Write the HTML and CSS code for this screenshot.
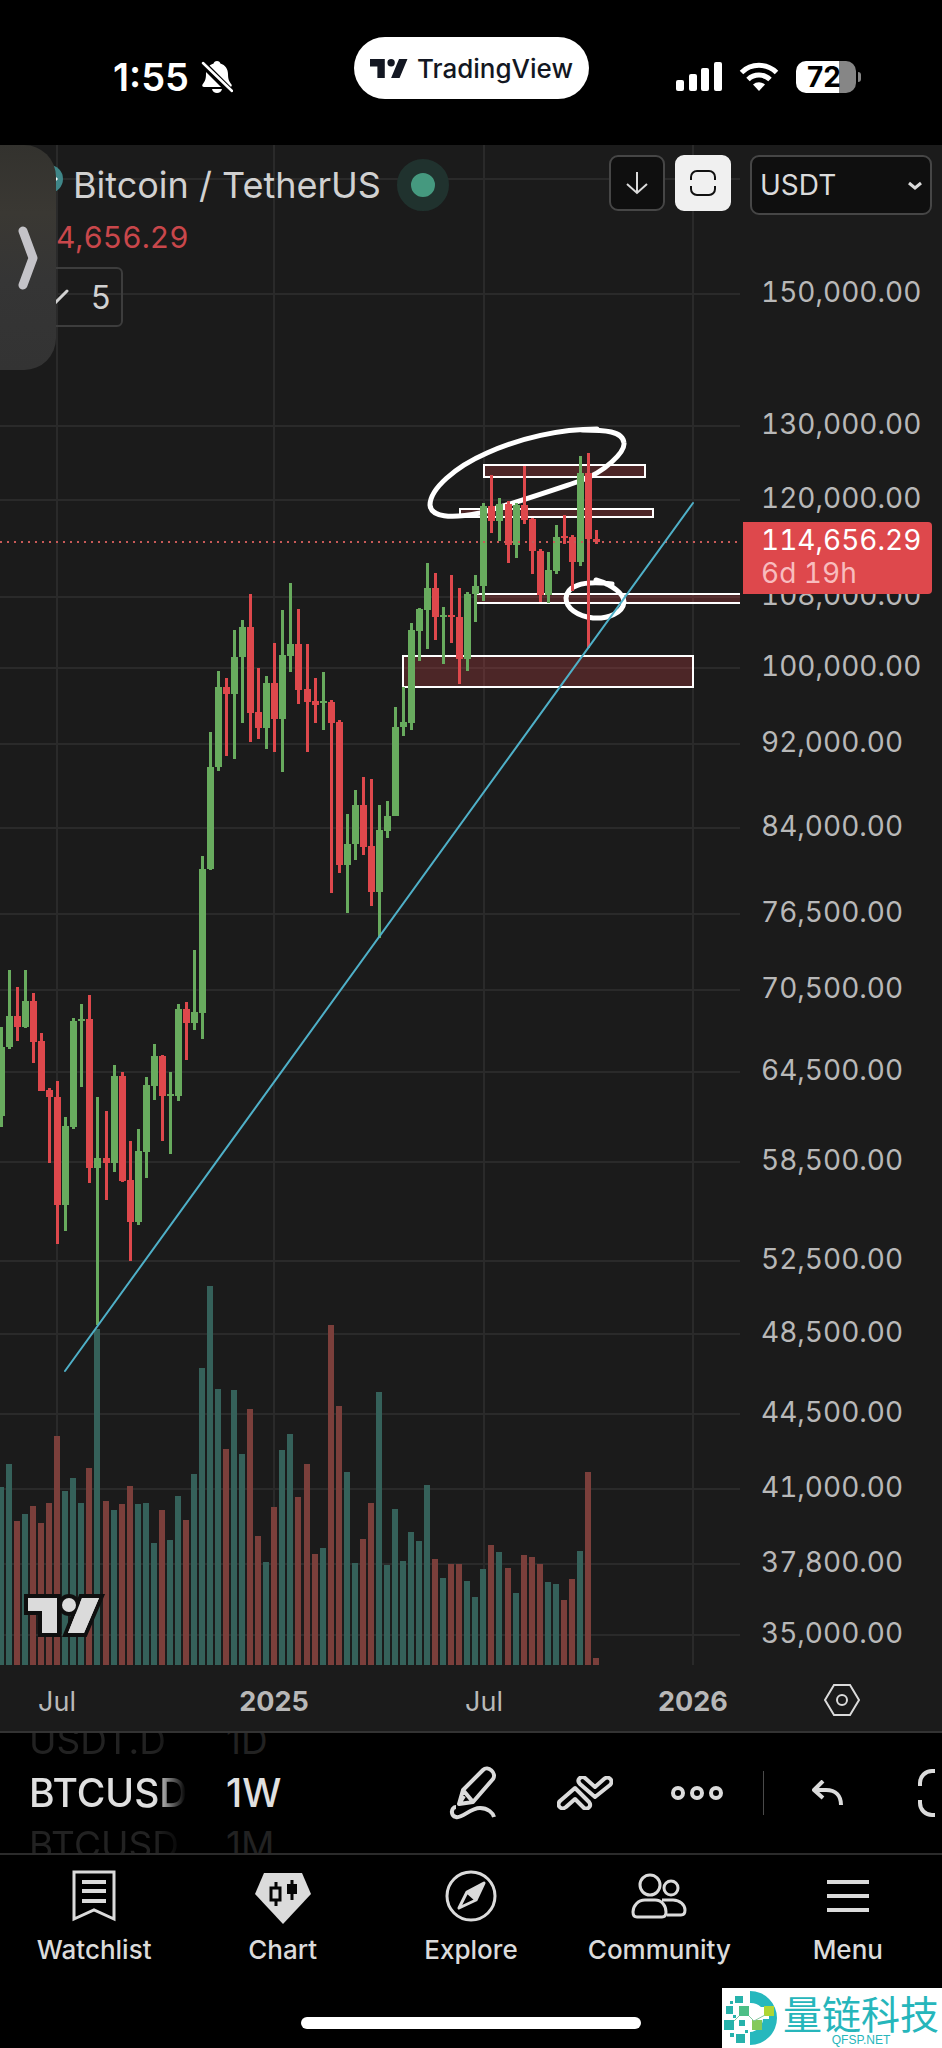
FILE: index.html
```html
<!DOCTYPE html>
<html lang="en">
<head>
    <meta charset="UTF-8">
    <meta name="viewport" content="width=device-width, initial-scale=1.0">
    <title>Bitcoin / TetherUS - TradingView</title>
    <link rel="stylesheet" href="styles.css">
</head>
<body>
    <header class="status-bar">
        <div class="status-left">
            <span class="time">1:55</span>
            <svg class="bell" width="32" height="34" viewBox="0 0 32 34">
                <path d="M16 1c2 0 3 1 3.400 2.500 5 1.500 7.600 5.500 7.600 10.500 0 6 1.500 7.500 3.500 10.500.7 1.300 0 2.500-1.500 2.500H3c-1.500 0-2.200-1.200-1.500-2.500C3.500 21.500 5 20 5 14c0-5 2.600-9 7.600-10.500C13 2 14 1 16 1z" fill="#fff"/>
                <path d="M11 29h10c-.5 2.500-2.500 4-5 4s-4.500-1.500-5-4z" fill="#fff"/>
                <path d="M1 3l29 29" stroke="#000" stroke-width="7"/>
                <path d="M2 3l29 28" stroke="#fff" stroke-width="2.500" stroke-linecap="round"/>
            </svg>
        </div>
        <div class="app-pill">
            <svg width="38" height="19" viewBox="0 0 36 18">
                <path d="M14 18H7V7H0V0h14zM28 18h-8L27.500 0h8z" fill="#131722"/>
                <circle cx="20" cy="3.500" r="3.500" fill="#131722"/>
            </svg>
            <span>TradingView</span>
        </div>
        <div class="status-right">
            <svg width="46" height="30" viewBox="0 0 46 30" fill="#fff">
                <rect x="0" y="18" width="8" height="11" rx="2"/>
                <rect x="13" y="12" width="8" height="17" rx="2"/>
                <rect x="25" y="6" width="8" height="23" rx="2"/>
                <rect x="38" y="0" width="8" height="29" rx="2"/>
            </svg>
            <svg width="40" height="30" viewBox="0 0 40 30">
                <path d="M2.500 10.500a25 25 0 0 1 35 0M9 17.500a16 16 0 0 1 22 0" fill="none" stroke="#fff" stroke-width="5"/>
                <path d="M20 29l-6-6.500a9 9 0 0 1 12 0z" fill="#fff"/>
            </svg>
            <div class="battery">72</div>
        </div>
    </header>

    <main class="chart">
        <svg id="chart" viewBox="0 145 942 1586"></svg>

        <div class="legend">
            <div class="legend-title">
                <svg class="coin" width="28" height="28" viewBox="0 0 28 28">
                    <circle cx="14" cy="14" r="14" fill="#3f8688"/>
                    <path d="M17 8l6 6-6 6z" fill="#fff"/>
                </svg>
                <h1>Bitcoin / TetherUS</h1>
                <span class="market-dot"></span>
            </div>
            <div class="legend-price">114,656.29</div>
            <button class="legend-toggle">
                <svg width="28" height="16" viewBox="0 0 28 16">
                    <path d="M2 2l12 12L26 2" fill="none" stroke="#d1d1d1" stroke-width="3" stroke-linecap="round"/>
                </svg>
                5
            </button>
        </div>

        <div class="chart-controls">
            <button class="square-button" aria-label="Scroll down">
                <svg width="24" height="26" viewBox="0 0 24 26">
                    <path d="M12 2v21M2 14l10 9 10-9" fill="none" stroke="#dbdbdb" stroke-width="2"/>
                </svg>
            </button>
            <button class="square-button active" aria-label="Full chart">
                <svg width="26" height="26" viewBox="0 0 26 26">
                    <path d="M1 10V7a6 6 0 0 1 6-6h12a6 6 0 0 1 6 6v3M1 16v3a6 6 0 0 0 6 6h12a6 6 0 0 0 6-6v-3" fill="none" stroke="#111" stroke-width="2"/>
                </svg>
            </button>
            <div class="currency">
                <select aria-label="Currency">
                    <option>USDT</option>
                </select>
                <svg width="14" height="10" viewBox="0 0 14 10">
                    <path d="M1 2l6 5 6-5" fill="none" stroke="#dbdbdb" stroke-width="3"/>
                </svg>
            </div>
        </div>

        <button class="side-handle" aria-label="Open panel">
            <svg width="22" height="66" viewBox="0 0 22 66">
                <path d="M6 6l10 27L6 60" fill="none" stroke="#c4c3c8" stroke-width="9" stroke-linecap="round" stroke-linejoin="round"/>
            </svg>
        </button>
    </main>

    <section class="toolbar">
        <div class="wheel symbols">
            <span>USDT.D</span>
            <strong>BTCUSD</strong>
            <span>BTCUSD</span>
        </div>
        <div class="wheel intervals">
            <span>1D</span>
            <strong>1W</strong>
            <span>1M</span>
        </div>
        <div class="tools">
            <button aria-label="Draw">
                <svg width="50" height="54" viewBox="0 0 50 54">
                    <path d="M11 38l4-14L35 4c5-5 14 3 10 9L25 36zM15 24l10 12M11 38l5-8M8 41c-5 0-6 9 0 10 6 2 14-9 24-9 8 0 13 5 14 9" />
                </svg>
            </button>
            <button aria-label="Patterns">
                <svg width="56" height="34" viewBox="0 0 56 34">
                    <path d="M18 12l14 14c3 4-1 8-5 6l-9-9-9 8c-5 4-10-2-6-6zM38 21L23 8c-4-4 1-9 5-6l10 9 9-8c5-4 10 2 6 6z"/>
                </svg>
            </button>
            <button aria-label="More">
                <svg width="52" height="14" viewBox="0 0 52 14">
                    <circle cx="7" cy="7" r="5"/>
                    <circle cx="26" cy="7" r="5"/>
                    <circle cx="45" cy="7" r="5"/>
                </svg>
            </button>
            <div class="divider"></div>
            <button aria-label="Undo">
                <svg width="32" height="26" viewBox="0 0 32 26">
                    <path d="M11 1L2 10l9 8M2 10h12c10 0 15 6 15 15"/>
                </svg>
            </button>
            <button class="fullscreen" aria-label="Fullscreen">
                <svg width="48" height="48" viewBox="0 0 48 48">
                    <path d="M2 17v-3A12 12 0 0 1 14 2h20a12 12 0 0 1 12 12v3M2 31v3a12 12 0 0 0 12 12h20a12 12 0 0 0 12-12v-3"/>
                </svg>
            </button>
        </div>
    </section>

    <nav class="tab-bar">
        <a href="#watchlist">
            <svg width="56" height="56" viewBox="0 0 56 56">
                <path d="M8 4h40v47l-20-9-20 9z" fill="none" stroke="#dbdbdb" stroke-width="3"/>
                <path d="M16 14h24M16 23h24M16 33h24" stroke="#dbdbdb" stroke-width="4"/>
            </svg>
            Watchlist
        </a>
        <a href="#chart">
            <svg width="56" height="56" viewBox="0 0 56 56">
                <path d="M9 5h38l9 21-28 30L0 26z" fill="#dbdbdb"/>
                <path d="M16 20h9v12h-9zM21 14v5M21 33v5M37 12v20" fill="none" stroke="#050505" stroke-width="3"/>
                <path d="M32 16h10v10H32z" fill="#050505"/>
            </svg>
            Chart
        </a>
        <a href="#explore">
            <svg width="56" height="56" viewBox="0 0 56 56">
                <circle cx="28" cy="28" r="24" fill="none" stroke="#dbdbdb" stroke-width="3"/>
                <path d="M16 40l8-16 17-9-8 17zM24 24l9 8" fill="none" stroke="#dbdbdb" stroke-width="3" stroke-linejoin="round"/>
                <path d="M24 24l17-9-8 17z" fill="#dbdbdb"/>
            </svg>
            Explore
        </a>
        <a href="#community">
            <svg width="56" height="56" viewBox="0 0 56 56" fill="none" stroke="#dbdbdb" stroke-width="3">
                <circle cx="19" cy="17" r="10"/>
                <circle cx="40" cy="20" r="7"/>
                <path d="M14 32h10c7 0 11 6 11 12 0 3-1 5-4 5H6c-3 0-4-2-4-5 0-6 5-12 12-12zM31 32h11c7 0 12 5 12 10 0 3-1 5-4 5H36"/>
            </svg>
            Community
        </a>
        <a href="#menu">
            <svg width="56" height="56" viewBox="0 0 56 56">
                <path d="M7 14h42M7 28h42M7 42h42" stroke="#dbdbdb" stroke-width="4"/>
            </svg>
            Menu
        </a>
    </nav>

    <footer class="bottom">
        <div class="home-indicator"></div>
    </footer>

    <div class="watermark">
        <svg width="54" height="56" viewBox="0 0 54 56">
            <path d="M27 1a27 27 0 0 1 0 54V42a14 14 0 0 0 13-13h6V17h-8a15 15 0 0 0-11-4z" fill="#26b8bd"/>
            <path d="M12 6h8v7h-8zM3 16h7v8H3zM1 30h10v10H1zM16 30h6v6h-6zM13 44h9v9h-9z" fill="#26b2ab"/>
            <path d="M16 16h10v10H16z" fill="#4ebf86"/>
            <path d="M29 30h10v10H29z" fill="#84c95b"/>
            <path d="M41 16h10v10H41z" fill="#aed634"/>
            <path d="M7 11h3v3H7zM10 25h3v3h-3zM7 43h4v4H7zM22 40h3v3h-3z" fill="#26b2ab"/>
            <path d="M26 26l5 5 11-6M16 26l-5 5" fill="none" stroke="#84c9a0"/>
        </svg>
        <div class="watermark-text">
            <span class="name">量链科技</span>
            <span class="site">QFSP.NET</span>
        </div>
    </div>

    <script src="chart.js"></script>
</body>
</html>
```
FILE: styles.css
```css
* {
    box-sizing: border-box;
}

body {
    font-family: Inter, "Noto Sans CJK SC", sans-serif;
    background-color: #000;
    color: #dbdbdb;
    margin: 0;
    min-height: 100vh;
    display: flex;
    flex-direction: column;
    position: relative;
    overflow-x: hidden;
}

button {
    font-family: inherit;
    background: none;
    border: none;
    padding: 0;
    color: inherit;
    cursor: pointer;
}

svg {
    display: block;
    flex: none;
}

/* Status bar */
.status-bar {
    height: 145px;
    padding: 37px 82px 0 113px;
    display: grid;
    grid-template-columns: 1fr auto 1fr;
    align-items: start;
    color: #fff;
}

.status-left,
.status-right {
    display: flex;
    align-items: center;
    height: 80px;
}

.status-left {
    gap: 12px;
}

.status-right {
    justify-content: flex-end;
    gap: 17px;
}

.time {
    font-size: 38px;
    font-weight: 600;
}

.app-pill {
    display: flex;
    align-items: center;
    gap: 9px;
    height: 62px;
    padding: 0 16px;
    border-radius: 31px;
    background: #fff;
    color: #131722;
    font-size: 26px;
    font-weight: 500;
    /* keeps the pill on the screen's centre line */
    margin-right: 30px;
}

.battery {
    position: relative;
    width: 60px;
    height: 32px;
    margin-right: 4px;
    padding-right: 4px;
    border-radius: 10px;
    background: linear-gradient(to right, #fff 72%, #868686 72%);
    color: #000;
    font-size: 28px;
    font-weight: 700;
    line-height: 32px;
    text-align: center;
}

.battery::after {
    content: "";
    position: absolute;
    right: -5px;
    top: 11px;
    width: 3px;
    height: 10px;
    border-radius: 0 3px 3px 0;
    background: #868686;
}

/* Chart */
.chart {
    position: relative;
    background: #1b1b1b;
    border-bottom: 2px solid #333;
}

.chart > svg {
    width: 100%;
    height: auto;
}

.grid-line {
    stroke: #2a2a2a;
    stroke-width: 2;
}

.axis-label {
    fill: #b8b8b8;
    font-size: 28px;
    font-variant-numeric: tabular-nums;
}

.axis-label.time-label {
    text-anchor: middle;
    font-size: 27px;
    font-variant-numeric: normal;
}

.axis-label.year {
    font-weight: 700;
}

.up {
    fill: #68ab5e;
}

.down {
    fill: #de484c;
}

.volume-up {
    fill: #35615a;
}

.volume-down {
    fill: #7b3f3b;
}

.zone {
    fill: #de484c;
    fill-opacity: 0.25;
    stroke: #fff;
    stroke-width: 2;
}

.zone.open {
    stroke: none;
}

.zone-edge {
    stroke: #fff;
    stroke-width: 2;
}

.brush {
    fill: none;
    stroke: #fff;
    stroke-width: 5;
    stroke-linecap: round;
    stroke-linejoin: round;
}

.trend-line {
    stroke: #4fb0c8;
    stroke-width: 2;
    stroke-linecap: round;
}

.price-line {
    stroke: #c95a58;
    stroke-width: 2;
    stroke-dasharray: 2 5;
}

.price-tag {
    fill: #de484c;
}

.price-tag-value {
    fill: #fff;
    font-size: 28px;
    font-variant-numeric: tabular-nums;
}

.price-tag-time {
    fill: #f8bcbe;
    font-size: 28px;
    font-variant-numeric: tabular-nums;
}

.logo {
    fill: #dbdbdb;
    stroke: #0f0f0f;
    stroke-width: 8;
    paint-order: stroke;
}

.settings {
    fill: none;
    stroke: #dbdbdb;
    stroke-width: 2;
}

/* Legend over the chart */
.legend {
    position: absolute;
    left: 17px;
    top: 14px;
}

.legend-title {
    display: flex;
    align-items: center;
    height: 52px;
}

.coin {
    margin: 0 10px 12px 18px;
}

.legend h1 {
    margin: 0;
    font-size: 36px;
    font-weight: 400;
    color: #d1d1d1;
}

.market-dot {
    width: 52px;
    height: 52px;
    margin-left: 16px;
    border: 14px solid #20322e;
    border-radius: 50%;
    background: #45997f;
}

.legend-price {
    margin-top: 8px;
    font-size: 30px;
    line-height: 36px;
    font-variant-numeric: tabular-nums;
    color: #c9474b;
}

.legend-toggle {
    display: flex;
    align-items: center;
    gap: 22px;
    width: 106px;
    height: 60px;
    margin-top: 12px;
    padding-left: 22px;
    border: 2px solid #3d3d3d;
    border-radius: 6px;
    font-size: 32px;
    color: #d1d1d1;
}

.chart-controls {
    position: absolute;
    right: 10px;
    top: 10px;
    display: flex;
    gap: 10px;
}

.square-button {
    display: flex;
    align-items: center;
    justify-content: center;
    width: 56px;
    height: 56px;
    border: 2px solid #464646;
    border-radius: 9px;
    background: #0f0f0f;
}

.square-button.active {
    border-color: #f0f0f0;
    background: #f0f0f0;
}

.currency {
    position: relative;
    width: 182px;
    margin-left: 9px;
}

.currency select {
    width: 100%;
    height: 60px;
    padding: 0 8px;
    appearance: none;
    border: 2px solid #464646;
    border-radius: 9px;
    background: #0f0f0f;
    color: #dbdbdb;
    font-family: inherit;
    font-size: 28px;
}

.currency svg {
    position: absolute;
    right: 10px;
    top: 26px;
    pointer-events: none;
}

.side-handle {
    position: absolute;
    left: 0;
    top: 0;
    width: 56px;
    height: 225px;
    padding-left: 17px;
    border-radius: 0 32px 32px 0;
    background: linear-gradient(#33322e, #3a3833 30%, #353535 60%, #333);
}

/* Toolbar */
.toolbar {
    display: flex;
    height: 122px;
    padding: 0 7px 0 29px;
    border-bottom: 2px solid #2b2b2b;
}

.wheel {
    display: flex;
    flex-direction: column;
    justify-content: center;
    height: 120px;
    overflow: hidden;
    line-height: 52px;
}

.wheel span,
.wheel strong {
    height: 52px;
    flex: none;
}

.wheel span {
    font-size: 37px;
    color: #222;
}

.wheel strong {
    font-size: 39px;
    font-weight: 500;
    color: #e0e0e0;
}

.symbols {
    width: 157px;
    margin-right: 40px;
    mask-image: linear-gradient(to right, #000 80%, transparent);
}

.tools {
    display: flex;
    align-items: center;
    margin-left: auto;
}

.tools button {
    display: flex;
    align-items: center;
    justify-content: center;
    width: 112px;
    height: 80px;
}

.tools svg {
    fill: none;
    stroke: #dbdbdb;
    stroke-width: 4;
    stroke-linejoin: round;
}

.tools .divider {
    width: 1px;
    height: 44px;
    margin: 0 8px 0 10px;
    background: #4a4a4a;
}

.tools .fullscreen {
    width: 51px;
    padding-left: 34px;
    justify-content: flex-start;
    overflow: hidden;
}

/* Tab bar */
.tab-bar {
    display: grid;
    grid-template-columns: repeat(5, 1fr);
    padding-top: 13px;
}

.tab-bar a {
    display: flex;
    flex-direction: column;
    align-items: center;
    gap: 10px;
    color: #dbdbdb;
    font-size: 26px;
    font-weight: 500;
    line-height: 32px;
    text-decoration: none;
}

.bottom {
    flex: 1;
    display: flex;
    align-items: flex-end;
    justify-content: center;
    padding-bottom: 19px;
}

.home-indicator {
    width: 36%;
    height: 12px;
    border-radius: 6px;
    background: #fff;
}

.watermark {
    position: absolute;
    right: 0;
    bottom: 0;
    display: flex;
    align-items: center;
    gap: 6px;
    width: 220px;
    height: 60px;
    padding-left: 1px;
    background: #fff;
    color: #26b6bb;
}

.watermark-text {
    display: flex;
    flex-direction: column;
    align-items: center;
}

.watermark .name {
    font-family: "Noto Sans CJK SC", sans-serif;
    font-size: 39px;
    line-height: 44px;
}

.watermark .site {
    font-family: "Liberation Sans", sans-serif;
    font-size: 12px;
    line-height: 12px;
}
```
FILE: chart.js
```js
const svg = document.getElementById("chart");

const paneRight = 740;
const paneBottom = 1665;
const step = 8.04;

const prices = [170000, 150000, 130000, 120000, 108000, 100000, 92000, 84000, 76500, 70500,
    64500, 58500, 52500, 48500, 44500, 41000, 37800, 35000];

const times = [
    { label: "Jul", x: 57 },
    { label: "2025", x: 274, year: true },
    { label: "Jul", x: 484 },
    { label: "2026", x: 693, year: true }
];

// direction, high, body top, body bottom, low, volume top
const candles = [
    ["u", 1027, 1047, 1116, 1127, 1487],
    ["u", 970, 1016, 1047, 1049, 1464],
    ["d", 987, 1016, 1027, 1041, 1521],
    ["u", 970, 1001, 1027, 1028, 1514],
    ["d", 993, 1001, 1042, 1063, 1506],
    ["d", 1033, 1041, 1091, 1091, 1523],
    ["d", 1088, 1090, 1097, 1163, 1503],
    ["d", 1081, 1097, 1205, 1244, 1436],
    ["u", 1117, 1126, 1205, 1231, 1491],
    ["u", 1018, 1021, 1127, 1129, 1478],
    ["u", 1004, 1019, 1021, 1087, 1503],
    ["d", 995, 1019, 1168, 1183, 1468],
    ["u", 1097, 1158, 1168, 1325, 1329],
    ["d", 1111, 1158, 1163, 1200, 1501],
    ["u", 1065, 1076, 1163, 1172, 1510],
    ["d", 1072, 1076, 1181, 1182, 1504],
    ["d", 1141, 1180, 1222, 1261, 1486],
    ["u", 1129, 1151, 1222, 1225, 1504],
    ["u", 1077, 1085, 1152, 1178, 1503],
    ["u", 1044, 1056, 1086, 1100, 1543],
    ["d", 1055, 1056, 1096, 1141, 1510],
    ["u", 1072, 1094, 1096, 1154, 1540],
    ["u", 1004, 1009, 1096, 1101, 1496],
    ["d", 1002, 1009, 1023, 1060, 1520],
    ["u", 950, 1012, 1023, 1030, 1474],
    ["u", 856, 869, 1013, 1039, 1368],
    ["u", 732, 767, 869, 870, 1286],
    ["u", 671, 687, 767, 771, 1389],
    ["d", 678, 687, 694, 756, 1449],
    ["u", 630, 657, 694, 759, 1390],
    ["u", 620, 627, 657, 723, 1454],
    ["d", 594, 627, 713, 742, 1409],
    ["d", 668, 712, 728, 739, 1536],
    ["u", 676, 683, 728, 749, 1562],
    ["d", 643, 683, 719, 752, 1507],
    ["u", 610, 655, 719, 772, 1450],
    ["u", 583, 644, 656, 672, 1434],
    ["d", 609, 644, 690, 704, 1497],
    ["d", 644, 689, 702, 752, 1464],
    ["d", 678, 701, 705, 723, 1554],
    ["u", 672, 701, 703, 730, 1548],
    ["d", 700, 702, 723, 893, 1325],
    ["d", 720, 722, 865, 873, 1406],
    ["u", 814, 844, 865, 913, 1472],
    ["u", 790, 805, 844, 860, 1563],
    ["d", 777, 805, 847, 855, 1539],
    ["d", 779, 846, 892, 906, 1503],
    ["u", 805, 830, 892, 938, 1392],
    ["u", 801, 816, 831, 838, 1565],
    ["u", 707, 727, 816, 816, 1509],
    ["u", 687, 722, 727, 736, 1561],
    ["u", 623, 630, 723, 730, 1532],
    ["u", 608, 609, 631, 661, 1541],
    ["u", 563, 588, 610, 649, 1485],
    ["d", 573, 588, 617, 640, 1559],
    ["u", 607, 615, 617, 664, 1578],
    ["d", 575, 615, 617, 643, 1564],
    ["d", 588, 617, 659, 684, 1564],
    ["u", 592, 594, 659, 671, 1581],
    ["u", 575, 586, 594, 622, 1597],
    ["u", 503, 506, 586, 601, 1569],
    ["d", 475, 506, 521, 533, 1545],
    ["u", 498, 504, 521, 541, 1552],
    ["d", 501, 504, 545, 563, 1568],
    ["u", 503, 505, 545, 558, 1593],
    ["d", 466, 505, 520, 524, 1555],
    ["d", 518, 519, 551, 574, 1557],
    ["d", 549, 551, 595, 602, 1564],
    ["u", 552, 570, 595, 603, 1582],
    ["u", 525, 537, 571, 574, 1584],
    ["d", 515, 536, 538, 544, 1600],
    ["d", 535, 537, 562, 591, 1579],
    ["u", 456, 473, 562, 566, 1551],
    ["d", 453, 473, 539, 648, 1472],
    ["d", 530, 539, 542, 544, 1658]
];

function add(tag, className, attrs, text) {
    const el = document.createElementNS("http://www.w3.org/2000/svg", tag);
    el.setAttribute("class", className);
    for (const key in attrs) {
        el.setAttribute(key, attrs[key]);
    }
    if (text) {
        el.textContent = text;
    }
    svg.appendChild(el);
}

// Logarithmic price scale
function priceY(price) {
    return Math.round(294 + 921.5 * Math.log(150000 / price));
}

function candleX(i) {
    return Math.round(1 + i * step);
}

function drawGrid() {
    times.forEach(t => {
        add("line", "grid-line", { x1: t.x, x2: t.x, y1: 145, y2: paneBottom });
        add("text", "axis-label time-label" + (t.year ? " year" : ""), { x: t.x, y: 1711 }, t.label);
    });
    prices.forEach(p => {
        const y = priceY(p);
        add("line", "grid-line", { x1: 0, x2: paneRight, y1: y, y2: y });
        if (p <= 150000) {
            const label = p.toLocaleString("en-US", { minimumFractionDigits: 2 });
            add("text", "axis-label", { x: 761, y: y + 8 }, label);
        }
    });
}

function drawVolume() {
    candles.forEach((c, i) => {
        add("rect", c[0] === "u" ? "volume-up" : "volume-down",
            { x: candleX(i) - 3, y: c[5], width: 6, height: paneBottom - c[5] });
    });
}

function drawZones() {
    add("rect", "zone", { x: 484, y: 465, width: 161, height: 12 });
    add("rect", "zone", { x: 460, y: 509, width: 193, height: 8 });
    add("rect", "zone open", { x: 477, y: 594, width: 263, height: 9 });
    add("line", "zone-edge", { x1: 477, x2: 740, y1: 594, y2: 594 });
    add("line", "zone-edge", { x1: 477, x2: 740, y1: 603, y2: 603 });
    add("rect", "zone", { x: 403, y: 656, width: 290, height: 31 });
}

function drawBrushes() {
    add("path", "brush", { d: "M597 429C560 429 520 438 487 453C455 467 430 489 430 505C431 517 450 519 480 513C515 503 550 491 580 481C605 472 625 452 624 443C623 431 605 430 582 430" });
    add("path", "brush", { d: "M596 580C613 585 624 594 624 602C623 613 608 619 593 618C577 616 566 608 566 598C567 587 580 580 612 584" });
}

function drawCandles() {
    candles.forEach((c, i) => {
        const x = candleX(i);
        const name = c[0] === "u" ? "up" : "down";
        add("rect", name, { x: x - 1, y: c[1], width: 3, height: c[4] - c[1] });
        add("rect", name, { x: x - 3, y: c[2], width: 7, height: c[3] - c[2] });
    });
}

function drawPrice() {
    add("line", "price-line", { x1: 0, x2: paneRight, y1: 542, y2: 542 });
    add("path", "price-tag", { d: "M743 522h185a4 4 0 0 1 4 4v64a4 4 0 0 1-4 4H743z" });
    add("text", "price-tag-value", { x: 761, y: 550 }, "114,656.29");
    add("text", "price-tag-time", { x: 761, y: 583 }, "6d 19h");
}

function drawMarks() {
    add("line", "trend-line", { x1: 65, y1: 1371, x2: 693, y2: 503 });
    add("path", "logo", { d: "M28 1598h29v35H42v-22H28zM82 1598h17l-15 35H68z" });
    add("circle", "logo", { cx: 69, cy: 1605, r: 7 });
    add("path", "", { d: "M28 1598h29v35H42v-22H28zM82 1598h17l-15 35H68z", fill: "#dbdbdb" });
    add("path", "settings", { d: "M834 1685h16l9 15-9 15h-16l-9-15z" });
    add("circle", "settings", { cx: 842, cy: 1700, r: 5 });
}

drawGrid();
drawVolume();
drawZones();
drawBrushes();
drawCandles();
drawPrice();
drawMarks();
```
